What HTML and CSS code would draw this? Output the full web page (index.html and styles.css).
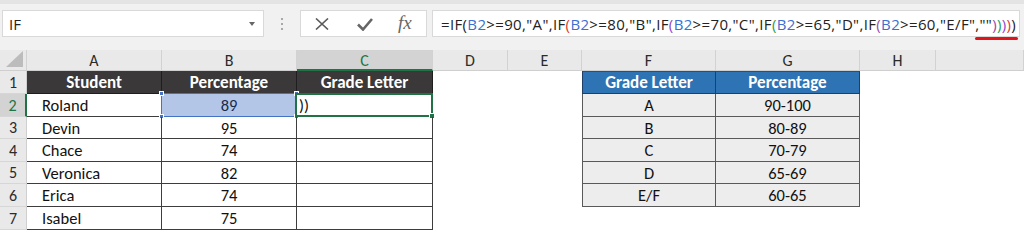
FILE: index.html
```html
<!DOCTYPE html>
<html>
<head>
<meta charset="utf-8">
<link rel="stylesheet" href="styles.css">
</head>
<body>
<div class="app">
  <div class="toolbar">
    <div class="namebox"><span class="nb-text">IF</span><span class="nb-arrow"></span></div>
    <div class="grip"><i></i><i></i><i></i></div>
    <div class="btnbox">
      <svg class="ico-x" width="14" height="12" viewBox="0 0 14 12"><path d="M1 0.5 L13 11.5 M13 0.5 L1 11.5" stroke="#5a5a5a" stroke-width="1.6" fill="none"/></svg>
      <svg class="ico-ok" width="16" height="13" viewBox="0 0 16 13"><path d="M1 6.5 L6 11.5 L15 1" stroke="#666" stroke-width="2.6" fill="none"/></svg>
      <span class="fx">fx</span>
    </div>
    <div class="fbox">
      <span class="ftext">=IF(<span class="ref">B2</span>&gt;=90,"A",IF<span class="p1">(</span><span class="ref">B2</span>&gt;=80,"B",IF<span class="p2">(</span><span class="ref">B2</span>&gt;=70,"C",IF<span class="p3">(</span><span class="ref">B2</span>&gt;=65,"D",IF<span class="p4">(</span><span class="ref">B2</span>&gt;=60,"E/F",""<span class="p4">)</span><span class="p3">)</span><span class="p2">)</span><span class="p1">)</span>)</span>
      <span class="squiggle"></span>
    </div>
  </div>
  <div class="sheet">
    <!-- column headers -->
    <div class="ch corner"><span class="tri"></span></div>
    <div class="ch">A</div>
    <div class="ch">B</div>
    <div class="ch ch-sel">C</div>
    <div class="ch">D</div>
    <div class="ch">E</div>
    <div class="ch">F</div>
    <div class="ch">G</div>
    <div class="ch">H</div>
    <div class="ch"></div>

    <!-- row 1 -->
    <div class="rh">1</div>
    <div class="c t hd first">Student</div>
    <div class="c t hd">Percentage</div>
    <div class="c t hd">Grade Letter</div>
    <div class="c"></div>
    <div class="c"></div>
    <div class="c r bh rfirst rtop">Grade Letter</div>
    <div class="c r bh rtop">Percentage</div>
    <div class="c"></div>
    <div class="c"></div>

    <!-- row 2 -->
    <div class="rh rh-sel">2</div>
    <div class="c t first name">Roland</div>
    <div class="c t num sel-b">89<span class="hl"><i class="k k1"></i><i class="k k2"></i><i class="k k3"></i><i class="k k4"></i></span></div>
    <div class="c t active">))<span class="act"><i class="fill"></i></span></div>
    <div class="c"></div>
    <div class="c"></div>
    <div class="c r rfirst">A</div>
    <div class="c r">90-100</div>
    <div class="c"></div>
    <div class="c"></div>

    <!-- row 3 -->
    <div class="rh">3</div>
    <div class="c t first name">Devin</div>
    <div class="c t num">95</div>
    <div class="c t"></div>
    <div class="c"></div>
    <div class="c"></div>
    <div class="c r rfirst">B</div>
    <div class="c r">80-89</div>
    <div class="c"></div>
    <div class="c"></div>

    <!-- row 4 -->
    <div class="rh">4</div>
    <div class="c t first name">Chace</div>
    <div class="c t num">74</div>
    <div class="c t"></div>
    <div class="c"></div>
    <div class="c"></div>
    <div class="c r rfirst">C</div>
    <div class="c r">70-79</div>
    <div class="c"></div>
    <div class="c"></div>

    <!-- row 5 -->
    <div class="rh">5</div>
    <div class="c t first name">Veronica</div>
    <div class="c t num">82</div>
    <div class="c t"></div>
    <div class="c"></div>
    <div class="c"></div>
    <div class="c r rfirst">D</div>
    <div class="c r">65-69</div>
    <div class="c"></div>
    <div class="c"></div>

    <!-- row 6 -->
    <div class="rh">6</div>
    <div class="c t first name">Erica</div>
    <div class="c t num">74</div>
    <div class="c t"></div>
    <div class="c"></div>
    <div class="c"></div>
    <div class="c r rfirst">E/F</div>
    <div class="c r">60-65</div>
    <div class="c"></div>
    <div class="c"></div>

    <!-- row 7 -->
    <div class="rh">7</div>
    <div class="c t first name">Isabel</div>
    <div class="c t num">75</div>
    <div class="c t"></div>
    <div class="c"></div>
    <div class="c"></div>
    <div class="c"></div>
    <div class="c"></div>
    <div class="c"></div>
    <div class="c"></div>
  </div>
</div>
</body>
</html>
```
FILE: styles.css
```css
* { box-sizing: border-box; }
html, body { margin: 0; padding: 0; background: #fff; }
body { width: 1024px; height: 230px; overflow: hidden; font-family: Carlito, Calibri, Lato, "Liberation Sans", sans-serif; }

.app { width: 1024px; }

.toolbar {
  position: relative;
  height: 50px;
  background: #f1f1f1;
  border-top: 4px solid #e4e4e4;
  display: flex;
  align-items: flex-start;
  padding-top: 6px;
  padding-left: 2px;
}
.namebox {
  width: 262px;
  height: 27px;
  background: #fff;
  border: 1px solid #d9d9d9;
  display: flex;
  align-items: center;
  padding-left: 6px;
  padding-right: 8px;
  justify-content: space-between;
}
.nb-text { font-family: "Open Sans", "Noto Sans", sans-serif; font-size: 15px; color: #222; }
.nb-arrow {
  width: 0; height: 0;
  border-left: 3.5px solid transparent;
  border-right: 3.5px solid transparent;
  border-top: 4px solid #666;
  margin-top: 1px;
}
.grip {
  width: 36px;
  height: 27px;
  display: flex;
  flex-direction: column;
  align-items: center;
  justify-content: center;
  gap: 3px;
}
.grip i { display: block; width: 2px; height: 2px; background: #a8a8a8; }
.btnbox {
  width: 127px;
  height: 27px;
  background: #fff;
  border: 1px solid #d9d9d9;
  display: flex;
  align-items: center;
  padding-left: 14px;
}
.ico-x { margin-top: 1px; }
.ico-ok { margin-left: 28px; margin-top: 1px; }
.fx {
  margin-left: 25px;
  font-family: "Liberation Serif", "DejaVu Serif", serif;
  font-style: italic;
  font-size: 19px;
  color: #666;
  line-height: 1;
  margin-top: -2px;
}
.fbox {
  margin-left: 5px;
  width: 588px;
  height: 27px;
  background: #fff;
  border: 1px solid #d9d9d9;
  display: flex;
  align-items: center;
  padding-left: 8px;
  white-space: nowrap;
  overflow: visible;
  position: relative;
}
.ftext { font-family: "Open Sans", "Noto Sans", sans-serif; font-size: 15px; color: #222; letter-spacing: 0.35px; }
.ref { color: #3c6fd1; }
.p1 { color: #e0392f; }
.p2 { color: #8f46c9; }
.p3 { color: #2c9a49; }
.p4 { color: #a146ae; }
.squiggle {
  position: absolute;
  left: 542px;
  top: 26px;
  width: 43px;
  height: 3px;
  border-radius: 2px;
  background: #e0141b;
}

.sheet {
  display: grid;
  grid-template-columns: 27px 135px 135px 136px 75px 74px 134px 144px 76px 1fr;
  grid-template-rows: 21px 23px 23px 22px 23px 22px 23px 23px;
}
.ch {
  background: #e9e9e9;
  border-right: 1px solid #d2d2d2;
  border-bottom: 1px solid #cfcfcf;
  display: flex;
  align-items: center;
  justify-content: center;
  font-size: 16px;
  color: #2b2b2b;
  padding-top: 1px;
}
.ch-sel { background: #d3d3d3; color: #217346; border-bottom: 2px solid #217346; }
.corner { position: relative; }
.tri {
  position: absolute;
  right: 3px;
  bottom: 3px;
  width: 0; height: 0;
  border-left: 17px solid transparent;
  border-bottom: 16px solid #bcbcbc;
}
.rh {
  background: #e9e9e9;
  border-right: 1px solid #cfcfcf;
  border-bottom: 1px solid #d6d6d6;
  display: flex;
  align-items: center;
  justify-content: center;
  font-size: 16px;
  color: #2b2b2b;
}
.rh-sel { background: #d3d3d3; color: #217346; border-right: 2px solid #217346; }

.c {
  display: flex;
  align-items: center;
  font-size: 16.5px;
  color: #111;
  white-space: nowrap;
  position: relative;
}
.t { border-right: 1px solid #3d3d3d; border-bottom: 1px solid #3d3d3d; }
.hd {
  background: #3a3838;
  color: #fff;
  font-weight: 700;
  font-size: 17px;
  justify-content: center;
  border-right-color: #1e1e1e;
  border-bottom-color: #1e1e1e;
}
.name { padding-left: 15px; }
.num { justify-content: center; }
.active { padding-left: 2px; }

.r {
  background: #ededed;
  border-right: 1px solid #595959;
  border-bottom: 1px solid #595959;
  justify-content: center;
}
.rfirst { border-left: 1px solid #595959; }
.rtop { border-top: 1px solid #2a4f7a; }
.bh { background: #2e74b5; color: #fff; font-weight: 700; font-size: 17px; border-bottom-color: #1f3f66; border-right-color: #1f3f66; }
.bh.rfirst { border-left-color: #1f3f66; }

.sel-b { background: #b4c6e7; color: #1b2a4a; }
.hl {
  position: absolute;
  left: -1px; top: -1px; right: -1px; bottom: -1px;
  border: 1.5px solid #4472c4;
}
.k { position: absolute; width: 5px; height: 5px; background: #4472c4; border: 0.5px solid #fff; }
.k1 { left: -3px; top: -3px; }
.k2 { right: -3px; top: -3px; }
.k3 { left: -3px; bottom: -3px; }
.k4 { right: -3px; bottom: -3px; }
.act {
  position: absolute;
  left: -2px; top: -1px; right: -1px; bottom: -1px;
  border: 2px solid #217346;
}
.fill {
  position: absolute;
  right: -4px; bottom: -4px;
  width: 6px; height: 6px;
  background: #217346;
  border: 1px solid #fff;
}
```
